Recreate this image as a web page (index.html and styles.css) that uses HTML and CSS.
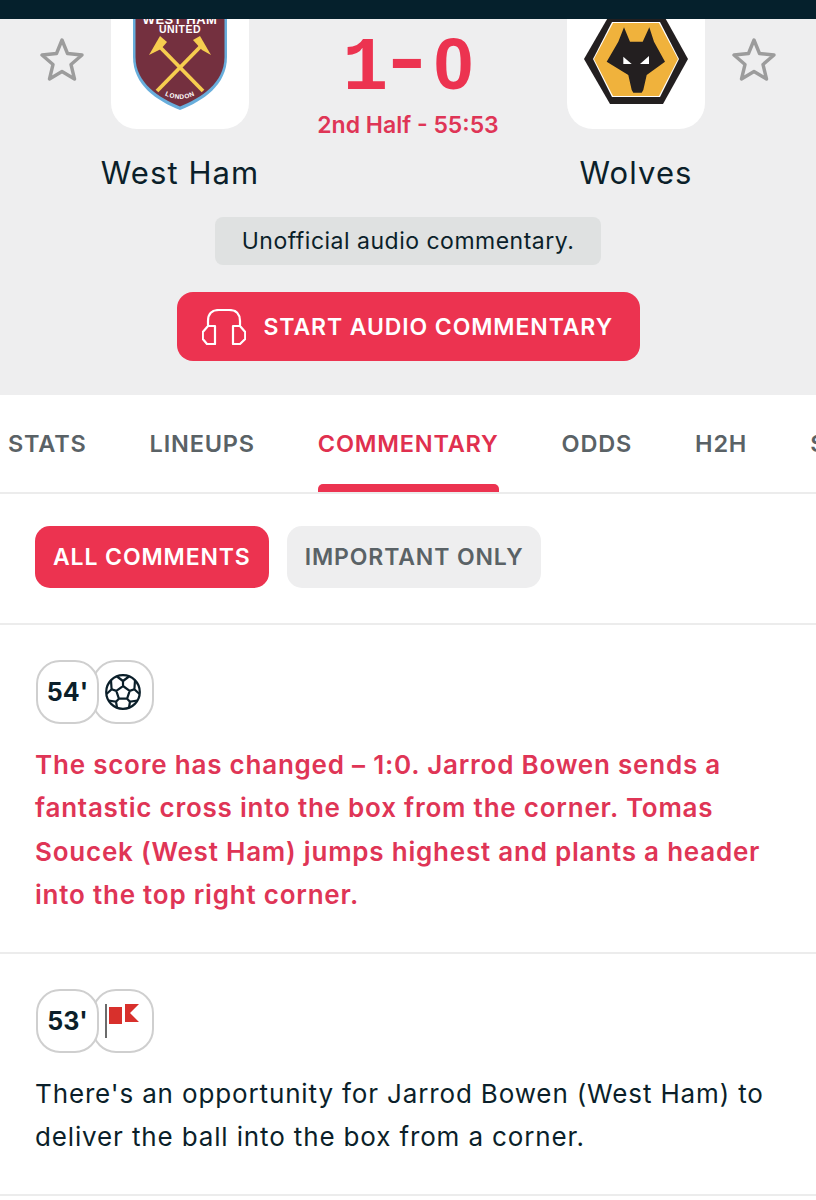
FILE: index.html
```html
<!DOCTYPE html>
<html lang="en">
<head>
<meta charset="utf-8">
<title>West Ham v Wolves</title>
<link rel="stylesheet" href="styles.css">
</head>
<body>
<div class="statusbar"></div>
<header class="match">
  <div class="teams">
    <svg class="star" viewBox="0 0 44 44"><path d="M22 2 27.5 15.5 42 17 31 26.5 34.5 41 22 33.5 9.5 41 13 26.5 2 17 16.5 15.5Z"/></svg>
    <div class="team">
      <div class="crest">
        <svg viewBox="0 0 138 138" width="138" height="138">
          <path d="M22 0H116V66C116 94 92 110 69 119 46 110 22 94 22 66Z" fill="#68aedc"/>
          <path d="M24.500 0H113.500V66C113.500 92 90 107 69 115.500 48 107 24.500 92 24.500 66Z" fill="#74303f"/>
          <text class="wh1" x="69" y="33">WEST HAM</text>
          <text class="wh2" x="69" y="41.500">UNITED</text>
          <g stroke="#f6cd4f" stroke-width="3.800" fill="none">
            <path d="M46 100 92 53"/><path d="M92 100 46 53"/>
          </g>
          <g fill="#f6cd4f">
            <path d="M38 64 49 45 56 51 50 58Z"/>
            <path d="M82 49 89 45 100 64 91 59Z"/>
          </g>
          <path id="londonarc" d="M50 102Q69 114 88 102" fill="none"/>
          <text class="wh3"><textPath href="#londonarc" startOffset="50%">LONDON</textPath></text>
        </svg>
      </div>
      <div class="team-name">West Ham</div>
    </div>
    <div class="score">
      <div class="score-num"><span class="num-one">1</span><span class="num-dash">-</span><span class="num-zero">0</span></div>
      <div class="period">2nd Half - 55:53</div>
    </div>
    <div class="team">
      <div class="crest">
        <svg viewBox="0 0 138 138" width="138" height="138">
          <path d="M17 68 43 113H96L121 68 96 23H43Z" fill="#231f20"/>
          <path d="M26 68 45 106H93L112 68 93 31H45Z" fill="#fff"/>
          <path d="M27 68 46 105H92L111 68 92 32H46Z" fill="#f0b23c"/>
          <path d="M57 36.300 63 50.700H75.700L82.300 36.300 87 50.700 98 70.700 79.700 84 76.300 99 74.700 101.700H66.300L64.700 99 61.300 84 39.700 70.700 51.300 50.700Z" fill="#231f20"/>
          <path d="M56.300 65.700V73H64.700Z" fill="#fff"/>
          <path d="M82 65V73H73Z" fill="#fff"/>
        </svg>
      </div>
      <div class="team-name">Wolves</div>
    </div>
    <svg class="star" viewBox="0 0 44 44"><path d="M22 2 27.5 15.5 42 17 31 26.5 34.5 41 22 33.5 9.5 41 13 26.5 2 17 16.5 15.5Z"/></svg>
  </div>
  <div class="notice">Unofficial audio commentary.</div>
  <button class="audio-btn">
    <svg class="phones" viewBox="0 0 44 36"><path d="M6 17V12Q6 1 17 1H27Q38 1 38 12V17M13 17V35H5L0.800 30V23L6 17ZM31 17V35H38L43.200 30V23L38 17Z"/></svg>
    <span>START AUDIO COMMENTARY</span>
  </button>
</header>
<nav class="tabs">
  <span class="tab">STATS</span>
  <span class="tab">LINEUPS</span>
  <span class="tab active">COMMENTARY</span>
  <span class="tab">ODDS</span>
  <span class="tab">H2H</span>
  <span class="tab">SUMMARY</span>
</nav>
<div class="filters">
  <span class="filter on">ALL COMMENTS</span>
  <span class="filter">IMPORTANT ONLY</span>
</div>
<section class="comment">
  <div class="badges">
    <span class="badge minute">54'</span>
    <span class="badge icon">
      <svg class="ball" viewBox="0 0 36 36">
        <circle cx="18" cy="18" r="16.800"/>
        <path d="M18 12 24.700 16.900 22.100 24.700H13.900L11.300 16.900ZM18 12V7M24.700 16.900 29.400 15.300M22.100 24.700 25 27.700M13.900 24.700 11 27.700M11.300 16.900 6.600 15.300"/>
        <path d="M12 2.500 18 7 24 2.500M30 6.500 29.400 15.300 34.500 20M32.500 26.500 25 27.700 24 33.500M12 33.500 11 27.700 3.500 26.500M1.500 20 6.600 15.300 6 6.500"/>
      </svg>
    </span>
  </div>
  <p class="text goal">The score has changed – 1:0. Jarrod Bowen sends a fantastic cross into the box from the corner. Tomas Soucek (West Ham) jumps highest and plants a header into the top right corner.</p>
</section>
<section class="comment">
  <div class="badges">
    <span class="badge minute">53'</span>
    <span class="badge icon">
      <svg class="flag" viewBox="0 0 36 36">
        <rect x="0" y="1" width="2" height="34" fill="#6b6b6b"/>
        <rect x="4" y="4" width="13" height="17" fill="#d8302c"/>
        <path d="M20 1H34L25 10 34 19H20Z" fill="#d8302c"/>
      </svg>
    </span>
  </div>
  <p class="text plain">There's an opportunity for Jarrod Bowen (West Ham) to deliver the ball into the box from a corner.</p>
</section>
</body>
</html>
```
FILE: styles.css
```css
* { box-sizing: border-box; }
html, body { margin: 0; padding: 0; }
body {
  width: 816px;
  height: 1200px;
  overflow: hidden;
  background: #fff;
  color: #0b1f2a;
  font-family: Inter, "Noto Sans", "Liberation Sans", sans-serif;
}
.statusbar { height: 19px; background: #05202c; }
.match {
  height: 376px;
  background: #eeeeef;
  overflow: hidden;
  display: flex;
  flex-direction: column;
  align-items: center;
}
.teams {
  width: 100%;
  flex: none;
  display: flex;
  align-items: flex-start;
  padding: 0 40px;
  gap: 27px;
  margin-top: -28px;
  height: 222px;
}
.star {
  width: 44px;
  height: 44px;
  margin-top: 47px;
  flex: none;
  fill: none;
  stroke: #9c9c9c;
  stroke-width: 3.4;
  stroke-linejoin: round;
}
.team {
  width: 138px;
  flex: none;
  display: flex;
  flex-direction: column;
  align-items: center;
}
.crest {
  width: 138px;
  height: 138px;
  background: #fff;
  border-radius: 26px;
  overflow: hidden;
}
.crest svg { display: block; }
.wh1, .wh2, .wh3 { fill: #fff; text-anchor: middle; font-family: "Liberation Sans", sans-serif; font-weight: 700; }
.wh1 { font-size: 13px; letter-spacing: .5px; }
.wh2 { font-size: 10.500px; letter-spacing: .5px; }
.wh3 { font-size: 6.500px; letter-spacing: .6px; }
.team-name {
  margin-top: 26px;
  font-size: 31px;
  line-height: 36px;
  white-space: nowrap;
  letter-spacing: 1.1px;
}
.score {
  flex: 1;
  margin: 0 -27px;
  display: flex;
  flex-direction: column;
  align-items: center;
  color: #ec3350;
}
.score-num {
  display: flex;
  align-items: baseline;
  justify-content: center;
  margin-top: 43px;
  height: 76px;
  line-height: 60px;
  font-weight: 700;
  font-size: 72px;
}
.num-one { font-family: "Liberation Mono", monospace; font-size: 76px; width: 42px; }
.num-dash {
  font-family: "Liberation Mono", monospace;
  font-size: 76px;
  width: 49px;
  transform: translateY(-6px) scaleX(1.3);
  transform-origin: 22.800px 50%;
}
.num-zero { font-family: "Liberation Sans", sans-serif; }
.period {
  font-size: 23px;
  line-height: 30px;
  font-weight: 600;
  color: #df3556;
}
.notice {
  width: 386px;
  height: 48px;
  flex: none;
  margin-top: 4px;
  background: #dfe1e1;
  border-radius: 8px;
  display: flex;
  align-items: center;
  justify-content: center;
  font-size: 23px;
  letter-spacing: .5px;
}
.audio-btn {
  margin-top: 27px;
  width: 463px;
  height: 69px;
  flex: none;
  border: 0;
  padding: 0 0 0 25px;
  background: #ec3350;
  border-radius: 16px;
  color: #fff;
  font: 600 23px Inter, sans-serif;
  letter-spacing: .9px;
  display: flex;
  align-items: center;
  gap: 18px;
}
.phones {
  width: 44px;
  height: 36px;
  flex: none;
  fill: none;
  stroke: #fff;
  stroke-width: 2.2;
  stroke-linejoin: round;
}
.tabs {
  height: 99px;
  padding-left: 8px;
  display: flex;
  gap: 63px;
  border-bottom: 2px solid #ececec;
  overflow: hidden;
  white-space: nowrap;
}
.tab {
  font-size: 23.500px;
  font-weight: 600;
  color: #5a6266;
  line-height: 97px;
  letter-spacing: .8px;
  height: 97px;
  flex: none;
}
.tab.active { color: #e0304f; }
.tab.active::after {
  content: "";
  display: block;
  height: 8px;
  margin-top: -8px;
  background: #ec3350;
  border-radius: 5px 5px 0 0;
}
.filters {
  height: 131px;
  padding: 32px 0 0 35px;
  display: flex;
  align-items: flex-start;
  gap: 18px;
  border-bottom: 2px solid #ececec;
}
.filter {
  height: 62px;
  padding: 0 18px;
  border-radius: 15px;
  background: #eeeeef;
  color: #5a6266;
  font-size: 23px;
  font-weight: 600;
  letter-spacing: .88px;
  display: flex;
  align-items: center;
}
.filter.on { background: #ec3350; color: #fff; }
.comment {
  padding: 35px 35px 0;
  border-bottom: 2px solid #ececec;
}
.comment:nth-of-type(1) { height: 329px; }
.comment:nth-of-type(2) { height: 242px; }
.badges { display: flex; height: 64px; padding-left: 1px; }
.badge {
  height: 64px;
  border: 2px solid #cfcfcf;
  border-radius: 24px;
  background: #fff;
  display: flex;
  align-items: center;
  justify-content: center;
}
.minute {
  width: 63px;
  position: relative;
  z-index: 1;
  font-size: 25px;
  font-weight: 700;
}
.icon { width: 62px; margin-left: -7px; }
.ball {
  width: 36px;
  height: 36px;
  fill: none;
  stroke: #0b1f2a;
  stroke-width: 2.2;
  margin-right: 1px;
}
.flag { width: 36px; height: 36px; }
.text {
  margin: 19px 0 0;
  font-size: 26px;
  line-height: 43.400px;
}
.plain { letter-spacing: .86px; }
.goal { color: #df3556; font-weight: 600; letter-spacing: .78px; }
```
